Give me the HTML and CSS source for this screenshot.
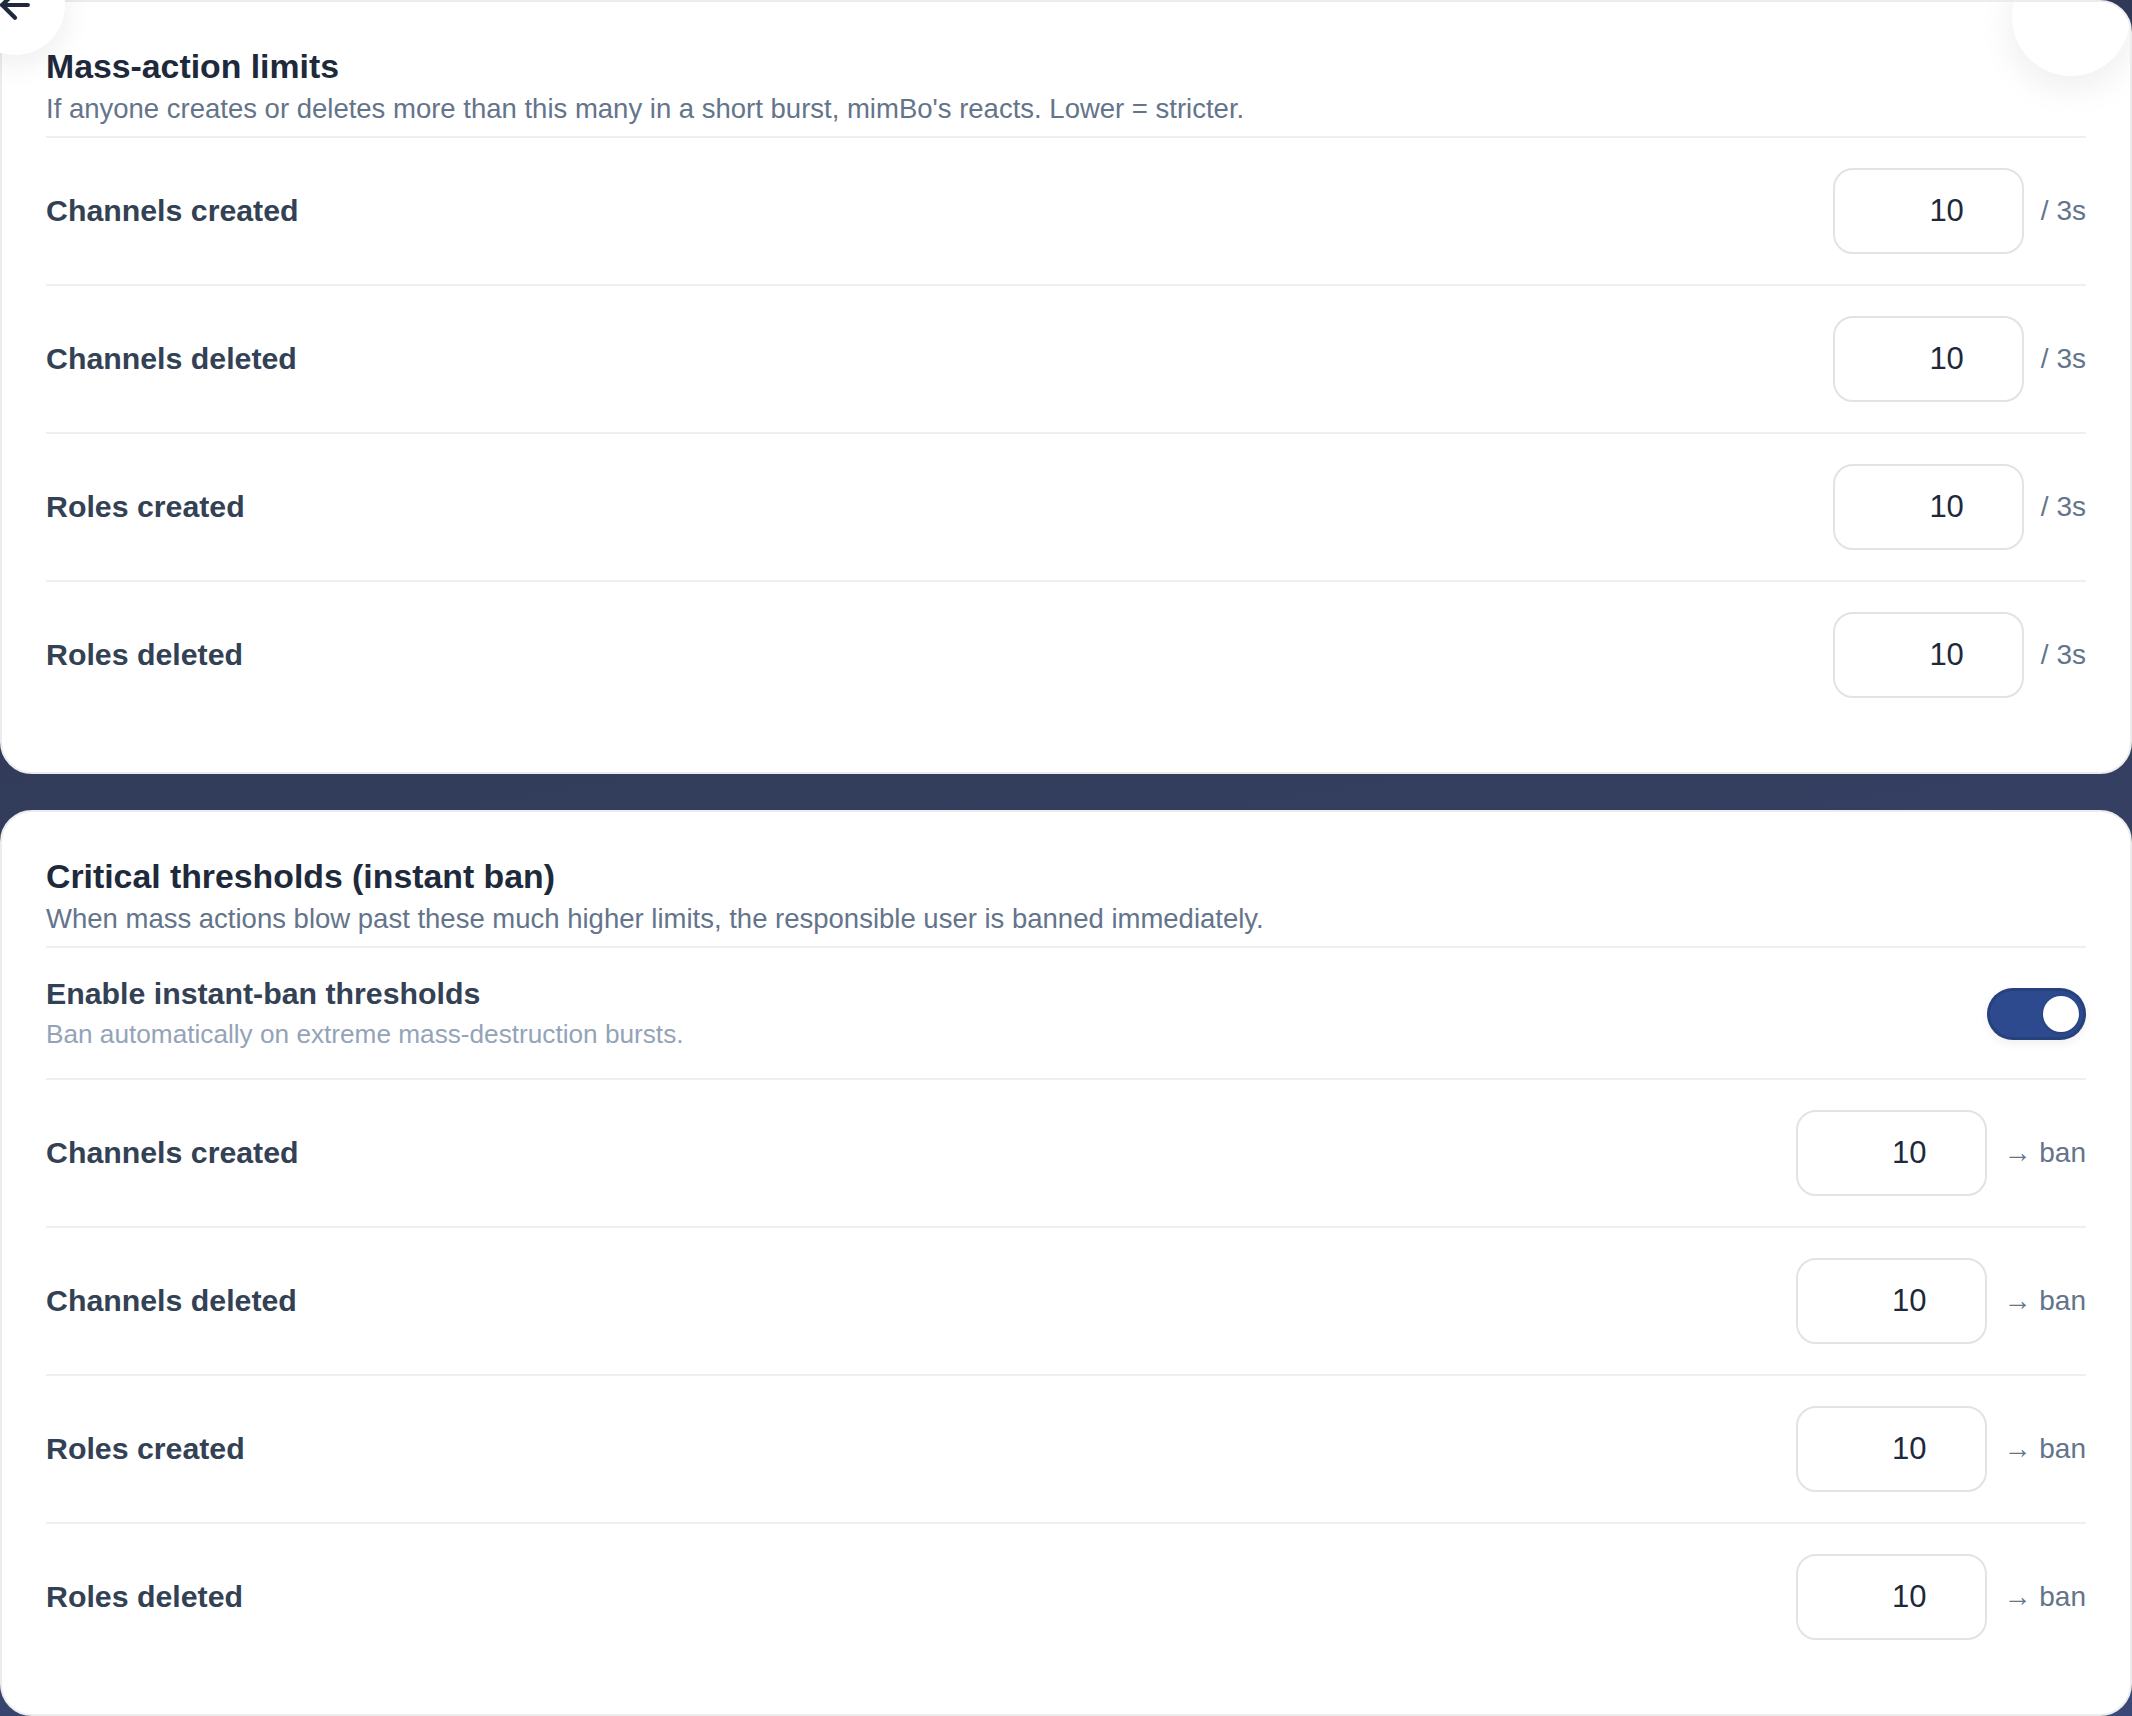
FILE: index.html
```html
<!DOCTYPE html>
<html lang="en">
<head>
  <meta charset="UTF-8" />
  <meta name="viewport" content="width=device-width, initial-scale=1.0"/>
  <title>Anti-nuke settings</title>
  <link rel="stylesheet" href="styles.css">
</head>
<body>
  <!-- Floating back button -->
  <button class="back-btn" aria-label="Back">
    <svg viewBox="0 0 24 24" width="44" height="44" fill="none" stroke="currentColor" stroke-width="2.3" stroke-linecap="round" stroke-linejoin="round">
      <path d="m12 19-7-7 7-7"/>
      <path d="M19 12H5"/>
    </svg>
  </button>

  <main class="settings">
    <!-- Mass-action limits -->
    <section class="card">
      <button class="corner-btn" aria-label="Menu"></button>
      <header class="card-head">
        <h2>Mass-action limits</h2>
        <p>If anyone creates or deletes more than this many in a short burst, mimBo's reacts. Lower = stricter.</p>
      </header>

      <div class="row">
        <span class="row-label">Channels created</span>
        <div class="row-control">
          <input class="num-input" type="text" value="10">
          <span class="unit">/ 3s</span>
        </div>
      </div>
      <div class="row">
        <span class="row-label">Channels deleted</span>
        <div class="row-control">
          <input class="num-input" type="text" value="10">
          <span class="unit">/ 3s</span>
        </div>
      </div>
      <div class="row">
        <span class="row-label">Roles created</span>
        <div class="row-control">
          <input class="num-input" type="text" value="10">
          <span class="unit">/ 3s</span>
        </div>
      </div>
      <div class="row">
        <span class="row-label">Roles deleted</span>
        <div class="row-control">
          <input class="num-input" type="text" value="10">
          <span class="unit">/ 3s</span>
        </div>
      </div>
    </section>

    <!-- Critical thresholds -->
    <section class="card">
      <header class="card-head">
        <h2>Critical thresholds (instant ban)</h2>
        <p>When mass actions blow past these much higher limits, the responsible user is banned immediately.</p>
      </header>

      <div class="row row-toggle">
        <div>
          <div class="row-label">Enable instant-ban thresholds</div>
          <div class="row-hint">Ban automatically on extreme mass-destruction bursts.</div>
        </div>
        <label class="switch">
          <input type="checkbox" checked>
          <span class="slider"></span>
        </label>
      </div>

      <div class="row">
        <span class="row-label">Channels created</span>
        <div class="row-control">
          <input class="num-input" type="text" value="10">
          <span class="unit"><span class="arrow">&rarr;</span> ban</span>
        </div>
      </div>
      <div class="row">
        <span class="row-label">Channels deleted</span>
        <div class="row-control">
          <input class="num-input" type="text" value="10">
          <span class="unit"><span class="arrow">&rarr;</span> ban</span>
        </div>
      </div>
      <div class="row">
        <span class="row-label">Roles created</span>
        <div class="row-control">
          <input class="num-input" type="text" value="10">
          <span class="unit"><span class="arrow">&rarr;</span> ban</span>
        </div>
      </div>
      <div class="row">
        <span class="row-label">Roles deleted</span>
        <div class="row-control">
          <input class="num-input" type="text" value="10">
          <span class="unit"><span class="arrow">&rarr;</span> ban</span>
        </div>
      </div>
    </section>
  </main>
</body>
</html>
```

FILE: styles.css
```css
:root {
  --page-bg: #333d5c;
  --card: #ffffff;
  --card-border: #ececec;
  --divider: #efefef;
  --heading: #1e293b;
  --label: #334155;
  --muted: #64748b;
  --hint: #94a3b8;
  --accent: #2d4a8f;
}

html, body {
  margin: 0;
  padding: 0;
}

body {
  font-family: "Liberation Sans", Arial, sans-serif;
  background: linear-gradient(170deg, #2d3653 0%, #333d5c 45%, #3a4878 100%);
  min-height: 100vh;
  overflow: hidden;
}

.settings {
  display: flex;
  flex-direction: column;
  gap: 36px;
}

.card {
  position: relative;
  background-color: var(--card);
  border: 2px solid var(--card-border);
  border-radius: 32px;
  padding: 44px;
  overflow: hidden;
}

.card-head {
  padding-bottom: 10px;
  border-bottom: 2px solid var(--divider);
}

.card-head h2 {
  margin: 0;
  font-size: 33.8px;
  line-height: 40px;
  font-weight: 700;
  color: var(--heading);
}

.card-head p {
  margin: 5px 0 0;
  font-size: 27.5px;
  line-height: 35px;
  color: var(--muted);
}

.row {
  display: flex;
  align-items: center;
  justify-content: space-between;
  padding: 30px 0;
  border-bottom: 2px solid var(--divider);
}

.row:last-child {
  border-bottom: none;
}

.row-label {
  font-size: 30.3px;
  font-weight: 700;
  color: var(--label);
}

.row-toggle {
  padding: 28px 0 27px;
}

.row-toggle .row-label {
  line-height: 36px;
}

.row-hint {
  margin-top: 6px;
  font-size: 26.2px;
  line-height: 33px;
  color: var(--hint);
}

.row-control {
  display: flex;
  align-items: center;
  gap: 17px;
}

.num-input {
  box-sizing: border-box;
  width: 191px;
  height: 86px;
  padding: 0 58px 0 16px;
  border: 2px solid #e3e3e3;
  border-radius: 20px;
  background: #fff;
  font-family: inherit;
  font-size: 31px;
  color: var(--heading);
  text-align: right;
  outline: none;
}

.unit {
  font-size: 28px;
  color: var(--muted);
}

/* toggle switch */
.switch {
  position: relative;
  display: inline-block;
  width: 99px;
  height: 52px;
  flex-shrink: 0;
}

.switch input {
  opacity: 0;
  width: 0;
  height: 0;
}

.slider {
  position: absolute;
  inset: 0;
  border-radius: 26px;
  background-color: #cbd5e1;
  box-shadow: inset 0 0 0 3px rgba(0, 0, 0, 0.12), 0 4px 10px rgba(15, 23, 42, 0.06);
  cursor: pointer;
}

.slider::before {
  content: "";
  position: absolute;
  top: 8px;
  left: 8px;
  width: 36px;
  height: 36px;
  border-radius: 50%;
  background: #fff;
  box-shadow: 0 1px 3px rgba(0, 0, 0, 0.2);
  transition: transform 0.2s;
}

.switch input:checked + .slider {
  background-color: var(--accent);
}

.switch input:checked + .slider::before {
  transform: translateX(48px);
}

/* round floating buttons */
.back-btn {
  position: fixed;
  top: -45px;
  left: -35px;
  z-index: 10;
  width: 100px;
  height: 100px;
  display: flex;
  align-items: center;
  justify-content: center;
  padding: 0;
  border: none;
  border-radius: 50%;
  background: #fff;
  color: var(--heading);
  box-shadow: 0 8px 30px rgba(15, 23, 42, 0.08);
  cursor: pointer;
}

.corner-btn {
  position: absolute;
  top: -44px;
  right: 0;
  width: 118px;
  height: 118px;
  padding: 0;
  border: none;
  border-radius: 50%;
  background: #fff;
  box-shadow: 0 10px 36px rgba(15, 23, 42, 0.08);
  cursor: pointer;
}
```
